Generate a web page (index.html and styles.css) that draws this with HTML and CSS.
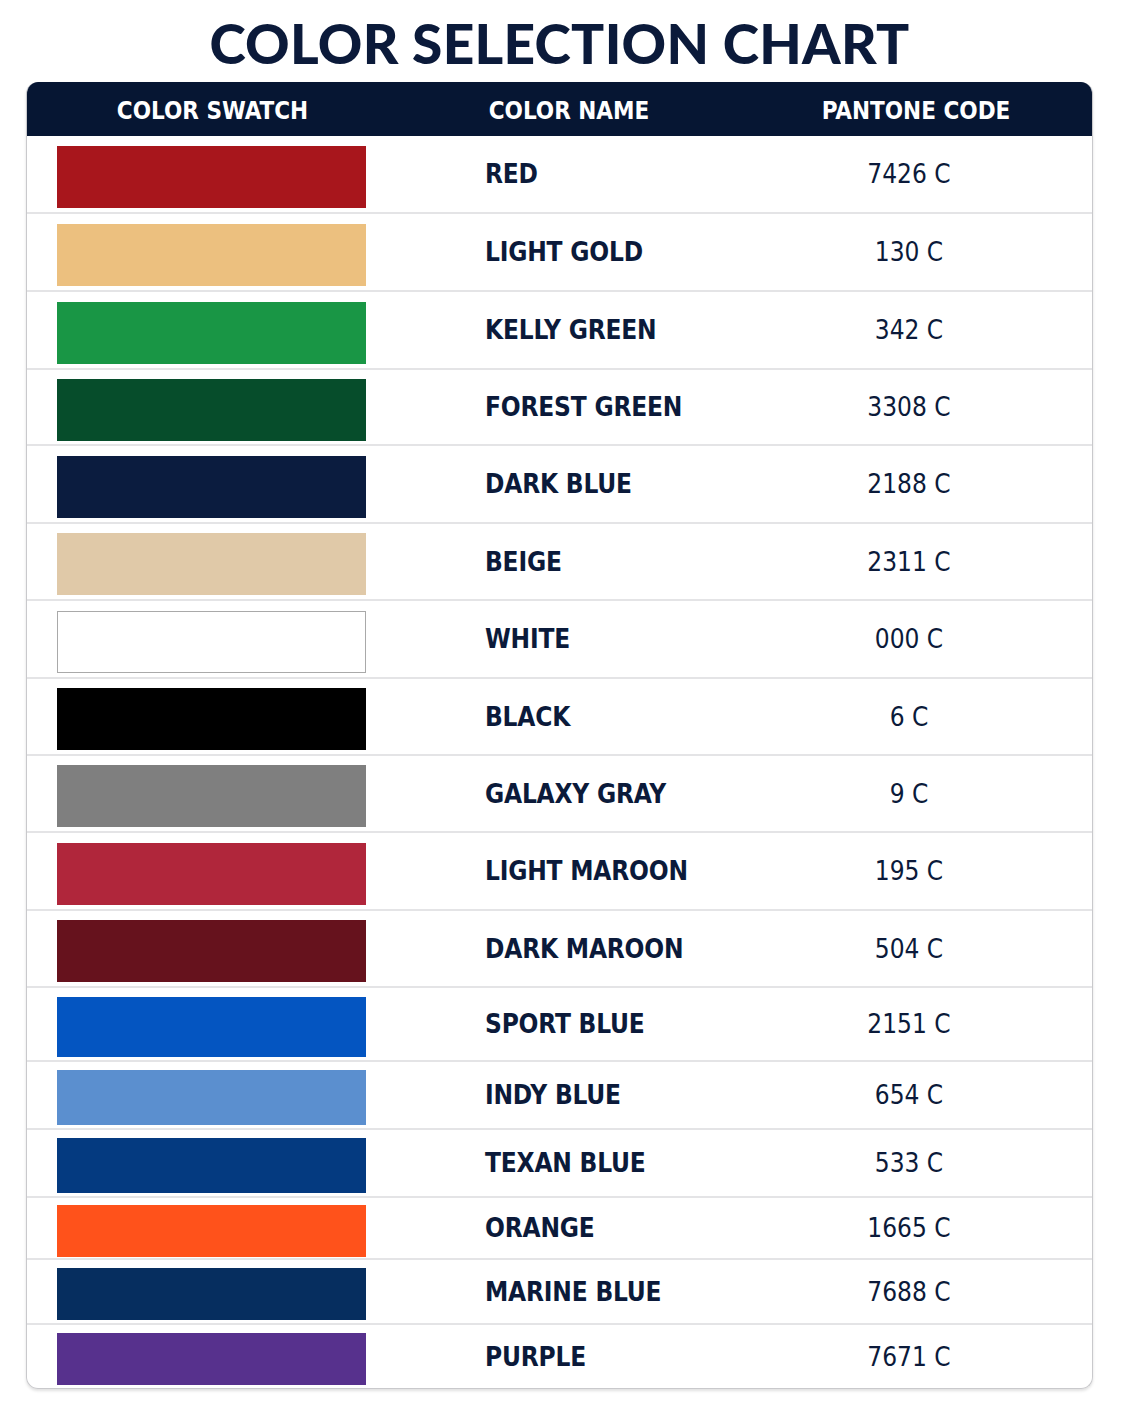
FILE: index.html
```html
<!DOCTYPE html>
<html>
<head>
<meta charset="utf-8">
<link rel="stylesheet" href="styles.css">
</head>
<body>
<div class="page">
  <h1 class="title">COLOR SELECTION CHART</h1>
  <div class="chart">
    <div class="head">
      <div class="hcell">COLOR SWATCH</div>
      <div class="hcell">COLOR NAME</div>
      <div class="hcell">PANTONE CODE</div>
    </div>
    <div class="row r-78"><div class="sw-cell"><div class="sw c-red"></div></div><div class="name">RED</div><div class="code">7426 C</div></div>
    <div class="row r-78"><div class="sw-cell"><div class="sw c-lgold"></div></div><div class="name">LIGHT GOLD</div><div class="code">130 C</div></div>
    <div class="row r-78"><div class="sw-cell"><div class="sw c-kelly"></div></div><div class="name">KELLY GREEN</div><div class="code">342 C</div></div>
    <div class="row r-76"><div class="sw-cell"><div class="sw c-forest"></div></div><div class="name">FOREST GREEN</div><div class="code">3308 C</div></div>
    <div class="row r-78"><div class="sw-cell"><div class="sw c-dblue"></div></div><div class="name">DARK BLUE</div><div class="code">2188 C</div></div>
    <div class="row r-77"><div class="sw-cell"><div class="sw c-beige"></div></div><div class="name">BEIGE</div><div class="code">2311 C</div></div>
    <div class="row r-78"><div class="sw-cell"><div class="sw c-white"></div></div><div class="name">WHITE</div><div class="code">000 C</div></div>
    <div class="row r-77"><div class="sw-cell"><div class="sw c-black"></div></div><div class="name">BLACK</div><div class="code">6 C</div></div>
    <div class="row r-77"><div class="sw-cell"><div class="sw c-gray"></div></div><div class="name">GALAXY GRAY</div><div class="code">9 C</div></div>
    <div class="row r-78"><div class="sw-cell"><div class="sw c-lmaroon"></div></div><div class="name">LIGHT MAROON</div><div class="code">195 C</div></div>
    <div class="row r-77"><div class="sw-cell"><div class="sw c-dmaroon"></div></div><div class="name">DARK MAROON</div><div class="code">504 C</div></div>
    <div class="row r-74"><div class="sw-cell"><div class="sw c-sport"></div></div><div class="name">SPORT BLUE</div><div class="code">2151 C</div></div>
    <div class="row r-68"><div class="sw-cell"><div class="sw c-indy"></div></div><div class="name">INDY BLUE</div><div class="code">654 C</div></div>
    <div class="row r-68"><div class="sw-cell"><div class="sw c-texan"></div></div><div class="name">TEXAN BLUE</div><div class="code">533 C</div></div>
    <div class="row r-62"><div class="sw-cell"><div class="sw c-orange"></div></div><div class="name">ORANGE</div><div class="code">1665 C</div></div>
    <div class="row r-65"><div class="sw-cell"><div class="sw c-marine"></div></div><div class="name">MARINE BLUE</div><div class="code">7688 C</div></div>
    <div class="row r-63 last"><div class="sw-cell"><div class="sw c-purple"></div></div><div class="name">PURPLE</div><div class="code">7671 C</div></div>
  </div>
</div>
</body>
</html>
```
FILE: styles.css
```css
html, body {
  margin: 0;
  padding: 0;
  background: #ffffff;
}
.page {
  width: 1122px;
  height: 1402px;
  padding: 0 29px 0 26px;
  box-sizing: border-box;
}
.title {
  margin: 0;
  height: 82px;
  padding-top: 11px;
  box-sizing: border-box;
  text-align: center;
  font-family: "Lato", sans-serif;
  font-weight: 900;
  font-size: 55px;
  line-height: 64px;
  color: #0b1a3a;
  letter-spacing: 0.3px;
}
.chart {
  border: 1px solid #c9c9cc;
  border-top: none;
  border-radius: 12px;
  overflow: hidden;
  box-shadow: 0 2px 3px rgba(0,0,0,0.12);
  font-family: "DejaVu Sans Condensed", "DejaVu Sans", sans-serif;
}
.head {
  display: grid;
  grid-template-columns: 371px 342px 1fr;
  height: 54px;
  background: #061633;
  align-items: center;
}
.hcell {
  text-align: center;
  color: #ffffff;
  font-weight: 700;
  font-size: 24px;
  padding-top: 3px;
}
.row {
  display: grid;
  grid-template-columns: 371px 342px 1fr;
  align-items: center;
  border-bottom: 2px solid #e4e4e6;
  box-sizing: border-box;
}
.row.last { border-bottom: none; }
.r-78 { height: 78px; }
.r-77 { height: 77px; }
.r-76 { height: 76px; }
.r-74 { height: 74px; }
.r-68 { height: 68px; }
.r-62 { height: 62px; }
.r-65 { height: 65px; }
.r-63 { height: 63px; }
.sw-cell {
  padding-left: 30px;
  padding-top: 5px;
}
.sw {
  width: 309px;
  height: 62px;
  box-sizing: border-box;
}
.r-74 .sw { height: 60px; }
.r-68 .sw { height: 55px; }
.r-62 .sw, .r-65 .sw, .r-63 .sw { height: 52px; }
.name {
  padding-left: 87px;
  font-weight: 700;
  font-size: 26px;
  letter-spacing: -0.2px;
  color: #0b1a3a;
}
.code {
  text-align: center;
  padding-right: 14px;
  font-size: 26px;
  color: #0b1a3a;
}
.c-red { background: #a8161c; }
.c-lgold { background: #ecc07f; }
.c-kelly { background: #199645; }
.c-forest { background: #064d2b; }
.c-dblue { background: #0b1c3f; }
.c-beige { background: #e0c9a8; }
.c-white { background: #ffffff; border: 1.5px solid #a9a9a9; }
.c-black { background: #000000; }
.c-gray { background: #7f7f7f; }
.c-lmaroon { background: #b0263b; }
.c-dmaroon { background: #66121d; }
.c-sport { background: #0455c1; }
.c-indy { background: #5b8fcf; }
.c-texan { background: #043a80; }
.c-orange { background: #ff521b; }
.c-marine { background: #062e5f; }
.c-purple { background: #57318d; }
```
